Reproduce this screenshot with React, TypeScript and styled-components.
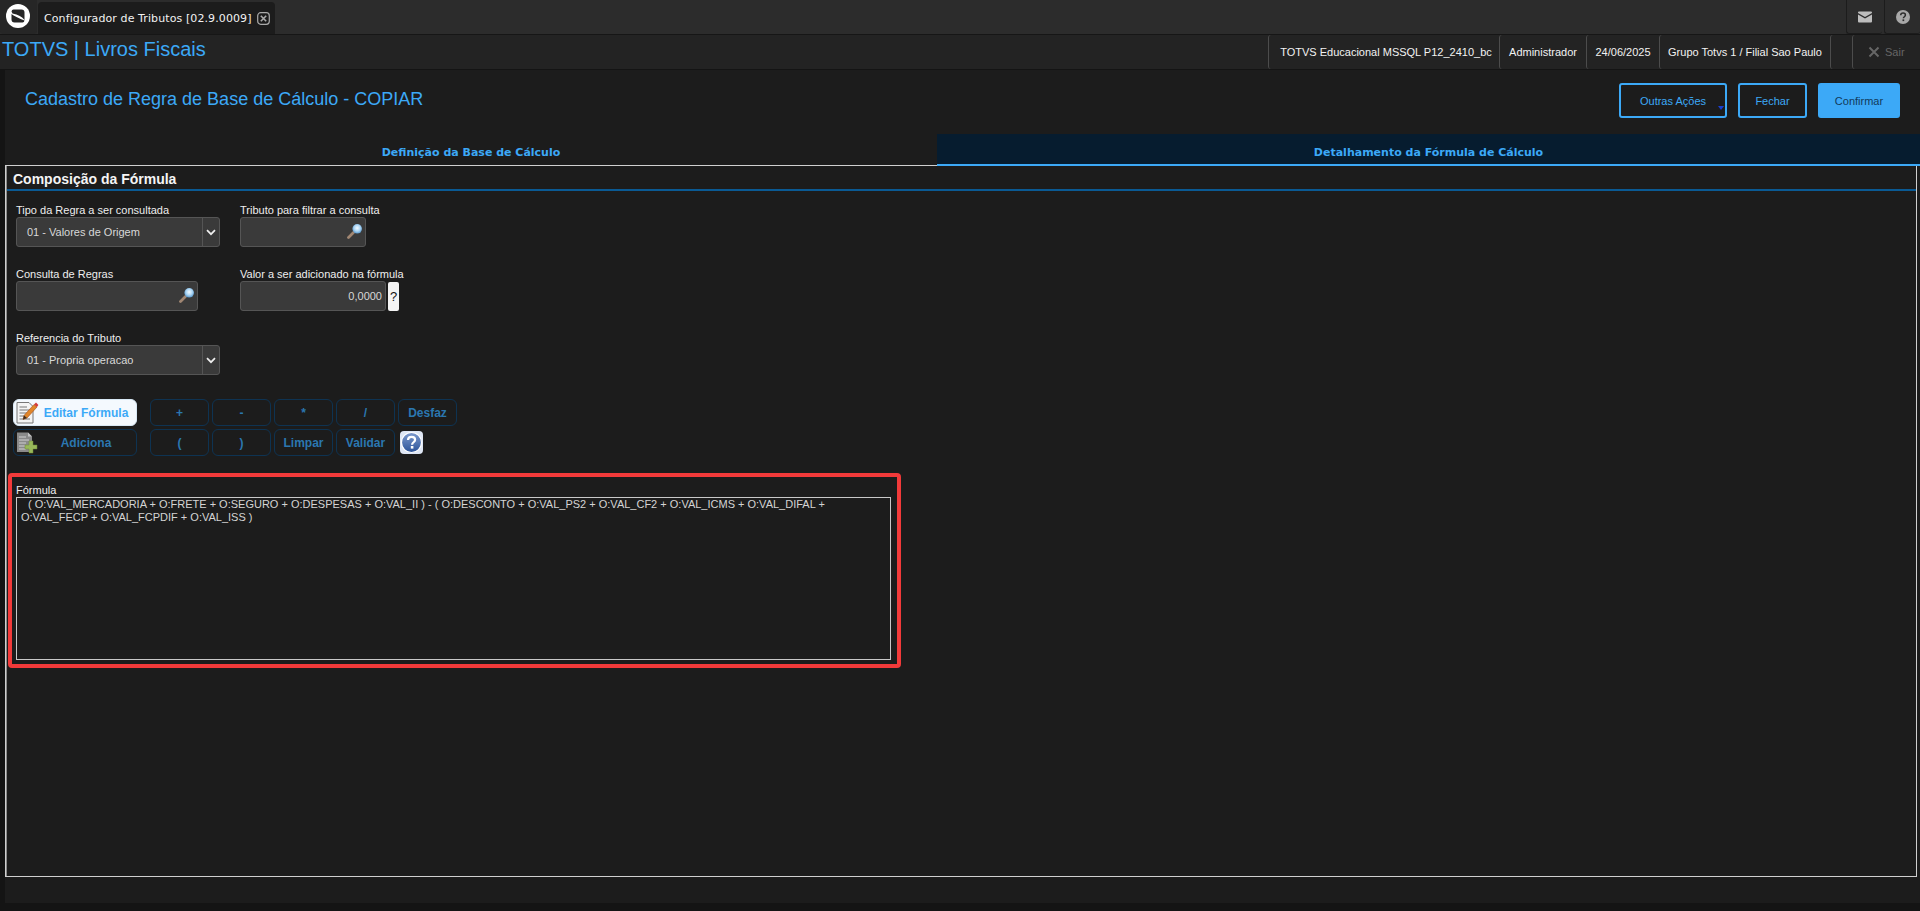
import React from "react";
import styled, { createGlobalStyle } from "styled-components";

const Global = createGlobalStyle`
  html, body { margin: 0; padding: 0; height: 100%; background: #141414; overflow: hidden; }
  #root { height: 911px; }
  * { box-sizing: border-box; }
`;

const BLUE = "#3ca9f7";
const sans = `"Liberation Sans", Arial, sans-serif`;

const Page = styled.div`
  width: 1920px;
  height: 911px;
  display: flex;
  flex-direction: column;
  background: #141414;
  font-family: ${sans};
`;

const TopBar = styled.header`
  height: 34px;
  display: flex;
  align-items: stretch;
  background: #2c2c2c;
  margin-bottom: 1px;
  box-shadow: 0 1px 0 #161616;
`;
const LogoTile = styled.div`
  width: 37px;
  display: flex;
  align-items: center;
  justify-content: center;
  padding: 0 1px 3px 0;
  background: #262626;
  border-radius: 0 0 3px 3px;
`;
const ProgramTab = styled.div`
  margin: 2px 0 0 1px;
  width: 237px;
  display: flex;
  align-items: center;
  gap: 5px;
  padding-left: 6px;
  background: #1c1c1c;
  border-radius: 4px 4px 0 0;
  color: #f2f2f2;
  font: 11px "DejaVu Sans", sans-serif;
  letter-spacing: 0.1px;
`;
const TabTitle = styled.span`
  white-space: nowrap;
`;
const TopSpacer = styled.div`
  flex: 1;
`;
const IconTile = styled.div`
  width: 36px;
  margin-left: 2px;
  display: flex;
  align-items: center;
  justify-content: center;
  background: #2c2c2c;
  border-left: 1px solid #1c1c1c;
  border-bottom: 1px solid #1c1c1c;
  border-radius: 0 0 3px 3px;
`;

const InfoBar = styled.div`
  height: 34px;
  display: flex;
  align-items: stretch;
  background: #232323;
`;
const Brand = styled.div`
  flex: 1;
  padding: 1px 0 0 2px;
  color: ${BLUE};
  font-size: 20px;
  line-height: 26px;
  white-space: nowrap;
`;
const InfoCell = styled.div<{ $w: number; $shift?: number }>`
  width: ${(p) => p.$w}px;
  display: flex;
  align-items: center;
  justify-content: center;
  padding-left: ${(p) => p.$shift ?? 0}px;
  border-left: 1px solid #4c4c4c;
  border-radius: 3px;
  color: #f2f2f2;
  font-size: 11px;
  white-space: nowrap;
`;
const ExitCell = styled.div`
  width: 68px;
  display: flex;
  align-items: center;
  gap: 5px;
  padding-left: 15px;
  border-left: 1px solid #4c4c4c;
  border-radius: 3px;
  color: #666;
  font-size: 11px;
`;

const Workspace = styled.main`
  margin: 1px 0 0 5px;
  height: 833px;
  width: 1915px;
  display: flex;
  flex-direction: column;
  background: #1c1c1c;
`;
const TitleRow = styled.div`
  height: 64px;
  display: flex;
  justify-content: space-between;
  padding: 13px 20px 0 20px;
`;
const PageTitle = styled.h1`
  margin: 4px 0 0;
  color: ${BLUE};
  font-size: 18px;
  font-weight: 400;
  line-height: 24px;
`;
const Actions = styled.div`
  display: flex;
  gap: 11px;
`;
const ActionButton = styled.button<{ $w: number; $primary?: boolean }>`
  position: relative;
  width: ${(p) => p.$w}px;
  height: 35px;
  border: 2px solid ${BLUE};
  border-radius: 3px;
  background: ${(p) => (p.$primary ? BLUE : "transparent")};
  color: ${(p) => (p.$primary ? "#123a5a" : BLUE)};
  font: 11px ${sans};
  padding: 0;
`;
const Caret = styled.i`
  position: absolute;
  right: 1px;
  bottom: 6px;
  border: 3px solid transparent;
  border-top: 4px solid #1a3fd0;
  border-bottom: 0;
`;

const Tabs = styled.nav`
  height: 32px;
  display: flex;
`;
const TabItem = styled.div<{ $active?: boolean }>`
  flex: ${(p) => (p.$active ? "0 0 983px" : "0 0 932px")};
  display: flex;
  align-items: center;
  justify-content: center;
  padding-top: ${(p) => (p.$active ? 6 : 5)}px;
  background: ${(p) => (p.$active ? "#061c2f" : "transparent")};
  border-bottom: ${(p) => (p.$active ? `2px solid ${BLUE}` : "1px solid #cfcfcf")};
  color: ${BLUE};
  font: bold 11px "DejaVu Sans", sans-serif;
`;

const Panel = styled.section`
  width: 1912px;
  height: 711px;
  border: solid #cfcfcf;
  border-width: 0 1px 1px 1px;
  box-shadow: inset 1px 0 0 #8a8a8a;
  display: flex;
  flex-direction: column;
  padding-left: 1px;
`;
const SectionHead = styled.h2`
  height: 25px;
  margin: 0;
  padding: 5px 0 0 6px;
  border-bottom: 2px solid #0a5a94;
  color: #f5f5f5;
  font-size: 14px;
  line-height: 16px;
  font-weight: 700;
`;

const FormGrid = styled.div`
  display: grid;
  grid-template-columns: 224px 1fr;
  grid-auto-rows: 64px;
  padding: 12px 0 0 9px;
  height: 208px;
`;
const Field = styled.div`
  display: flex;
  flex-direction: column;
  align-items: flex-start;
`;
const FieldLabel = styled.label`
  display: block;
  height: 14px;
  color: #eeeeee;
  font-size: 11px;
  line-height: 14px;
  white-space: nowrap;
`;
const FieldRow = styled.div`
  display: flex;
  gap: 2px;
`;
const InputBox = styled.div<{ $w: number }>`
  width: ${(p) => p.$w}px;
  height: 30px;
  display: flex;
  align-items: center;
  background: #3a3a3a;
  border: 1px solid #555;
  border-radius: 3px;
  color: #d8d8d8;
  font-size: 11px;
`;
const SelectText = styled.span`
  flex: 1;
  padding-left: 10px;
`;
const ChevronCell = styled.span`
  width: 17px;
  height: 100%;
  display: flex;
  align-items: center;
  justify-content: center;
  border-left: 1px solid #555;
`;
const LensSlot = styled.span`
  margin-left: auto;
  margin-right: 2px;
  margin-bottom: 3px;
  display: flex;
`;
const ValueText = styled.span`
  flex: 1;
  text-align: right;
  padding-right: 3px;
`;
const HintButton = styled.span`
  width: 11px;
  height: 29px;
  margin-top: 1px;
  display: flex;
  align-items: center;
  justify-content: center;
  background: #f4f4f4;
  border-radius: 2px;
  color: #111;
  font-size: 13px;
`;

const ButtonArea = styled.div`
  display: grid;
  grid-template-columns: 124px repeat(5, 59px);
  grid-auto-rows: 27px;
  gap: 3px;
  padding-left: 6px;
`;
const ButtonGroupGap = styled.div`
  display: contents;
`;
const CalcButton = styled.button`
  height: 27px;
  margin-left: 10px;
  width: 59px;
  padding: 0;
  background: transparent;
  border: 1px solid #0e3352;
  border-radius: 6px;
  color: #2b77b0;
  font: bold 12px ${sans};
`;
const WideButton = styled.button<{ $light?: boolean }>`
  width: 124px;
  height: 27px;
  padding: 0 0 0 22px;
  position: relative;
  background: ${(p) => (p.$light ? "#f4f9fe" : "transparent")};
  border: 1px solid ${(p) => (p.$light ? "#d8e8f5" : "#0e3352")};
  border-radius: 6px;
  color: ${(p) => (p.$light ? "#3ca9f7" : "#2b77b0")};
  font: bold 12px ${sans};
`;
const WideIcon = styled.span`
  position: absolute;
  left: 1px;
  top: 1px;
  display: flex;
`;
const HelpSlot = styled.span`
  margin-left: 12px;
  display: flex;
  align-items: center;
`;

const Annotated = styled.div`
  width: 893px;
  height: 195px;
  margin: 17px 0 0 1px;
  padding: 6px 0 0 4px;
  border: 4px solid #f23a3a;
  border-radius: 4px;
`;
const FormulaBox = styled.div`
  width: 875px;
  height: 163px;
  padding: 0 30px 0 4px;
  border: 1px solid #c8c8c8;
  color: #d4d4d4;
  font-size: 11px;
  line-height: 12.5px;
`;
const Indent = styled.span`
  margin-left: 7px;
`;

const Logo = () => (
  <svg width="28" height="28" viewBox="0 0 28 28">
    <circle cx="14" cy="14" r="12" fill="#fff" />
    <path d="M9.5 7.5H17.5Q20.5 7.5 20.5 10.5V18Q17 13 8.5 11.5L7.5 9.5Q7.8 7.5 9.5 7.5Z" fill="#262626" />
    <path d="M18.5 20.5H10.5Q7.5 20.5 7.5 17.5V11.9Q11 14.8 20.5 18.5 20.2 20.5 18.5 20.5Z" fill="#262626" />
  </svg>
);
const CloseIcon = () => (
  <svg width="13" height="13" viewBox="0 0 13 13">
    <rect x="0.7" y="0.7" width="11.6" height="11.6" rx="3" fill="none" stroke="#aaa" strokeWidth="1.2" />
    <path d="M3.8 3.8 9.2 9.2M9.2 3.8 3.8 9.2" stroke="#aaa" strokeWidth="1.6" />
  </svg>
);
const Mail = () => (
  <svg width="14" height="12" viewBox="0 0 14 12">
    <path d="M0 1.5A1 1 0 0 1 1 .5H13a1 1 0 0 1 1 1v.4L7 6 0 1.9Z" fill="#bdbdbd" />
    <path d="M0 3.4 7 7.5l7-4.1V10.5a1 1 0 0 1-1 1H1a1 1 0 0 1-1-1Z" fill="#bdbdbd" />
  </svg>
);
const Help = () => (
  <svg width="14" height="14" viewBox="0 0 14 14">
    <circle cx="7" cy="7" r="7" fill="#a8a8a8" />
    <path d="M4.7 5.2C4.8 3.8 5.8 3.1 7.1 3.1c1.4 0 2.3.8 2.3 1.9 0 1.8-2 1.7-2 3.3" fill="none" stroke="#2c2c2c" strokeWidth="1.5" />
    <rect x="6.5" y="9.4" width="1.7" height="1.7" fill="#2c2c2c" />
  </svg>
);
const Chevron = () => (
  <svg width="10" height="7" viewBox="0 0 10 7">
    <path d="M1 1.2 5 5.2 9 1.2" fill="none" stroke="#eee" strokeWidth="1.7" />
  </svg>
);
const Lens = ({ id }: { id: string }) => (
  <svg width="16" height="16" viewBox="0 0 16 16">
    <defs>
      <radialGradient id={id} cx="50%" cy="42%" r="60%">
        <stop offset="0" stopColor="#f4fbff" />
        <stop offset="0.55" stopColor="#a9d4f4" />
        <stop offset="1" stopColor="#4f8fc4" />
      </radialGradient>
    </defs>
    <path d="M1.5 14.5 6.5 9.5" stroke="#a08672" strokeWidth="2.8" strokeLinecap="round" />
    <circle cx="10.2" cy="5.8" r="4.8" fill={`url(#${id})`} />
  </svg>
);
const XMark = () => (
  <svg width="12" height="12" viewBox="0 0 12 12">
    <path d="M1.5 1.5 10.5 10.5M10.5 1.5 1.5 10.5" stroke="#666" strokeWidth="2" />
  </svg>
);
const EditIcon = () => (
  <svg width="24" height="24" viewBox="0 0 24 24">
    <path d="M2 1.5H14L18 5.5V22H2Z" fill="#f4f4f4" stroke="#777" />
    <path d="M4.5 6H12M4.5 9H15M4.5 12H13M4.5 15H11M4.5 18H15" stroke="#777" strokeWidth="1" />
    <path d="M8 18.5 9 14.5 19 3.5 22 6 12 17Z" fill="#e0862a" stroke="#a24b16" strokeWidth=".6" />
    <path d="M19 3.5 21 1.5 23.4 4 22 6Z" fill="#d33b3b" />
    <path d="M8 18.5 9 14.5 12 17Z" fill="#3a2c20" />
  </svg>
);
const AddIcon = () => (
  <svg width="24" height="24" viewBox="0 0 24 24">
    <path d="M2 1.5H13L17 5.5V21H2Z" fill="#8a8a8a" />
    <path d="M13 1.5V5.5H17Z" fill="#c4c4c4" />
    <path d="M4 6H11M4 9H14M4 12H11M4 15H10M4 18H11" stroke="#d0d0d0" strokeWidth="1" />
    <path d="M14 10H18V14H22V18H18V22H14V18H10V14H14Z" fill="#98b85a" stroke="#6c8a35" strokeWidth=".5" />
  </svg>
);
const QuestionBadge = () => (
  <svg width="23" height="23" viewBox="0 0 23 23">
    <defs>
      <linearGradient id="qG" x1="0" y1="0" x2="0" y2="1">
        <stop offset="0" stopColor="#7f9ccf" />
        <stop offset="1" stopColor="#2a5298" />
      </linearGradient>
    </defs>
    <rect x="0" y="0" width="23" height="23" rx="4" fill="#dfe7f5" />
    <circle cx="11.5" cy="11.5" r="10" fill="url(#qG)" stroke="#fff" strokeWidth="1.2" />
    <path d="M8 9C8 6.8 9.7 5.8 11.6 5.8c2 0 3.5 1.2 3.5 2.9 0 2.6-3 2.5-3 5" fill="none" stroke="#fff" strokeWidth="2.2" />
    <rect x="10.8" y="15" width="2.6" height="2.6" fill="#fff" />
  </svg>
);

const SelectField = ({ text }: { text: string }) => (
  <InputBox $w={204}>
    <SelectText>{text}</SelectText>
    <ChevronCell>
      <Chevron />
    </ChevronCell>
  </InputBox>
);

export default function App() {
  return (
    <Page>
      <Global />
      <TopBar>
        <LogoTile>
          <Logo />
        </LogoTile>
        <ProgramTab>
          <TabTitle>Configurador de Tributos [02.9.0009]</TabTitle>
          <CloseIcon />
        </ProgramTab>
        <TopSpacer />
        <IconTile>
          <Mail />
        </IconTile>
        <IconTile>
          <Help />
        </IconTile>
      </TopBar>
      <InfoBar>
        <Brand>TOTVS | Livros Fiscais</Brand>
        <InfoCell $w={231} $shift={4}>TOTVS Educacional MSSQL P12_2410_bc</InfoCell>
        <InfoCell $w={87}>Administrador</InfoCell>
        <InfoCell $w={73}>24/06/2025</InfoCell>
        <InfoCell $w={171}>Grupo Totvs 1 / Filial Sao Paulo</InfoCell>
        <InfoCell $w={22} />
        <ExitCell>
          <XMark />
          Sair
        </ExitCell>
      </InfoBar>
      <Workspace>
        <TitleRow>
          <PageTitle>Cadastro de Regra de Base de Cálculo - COPIAR</PageTitle>
          <Actions>
            <ActionButton $w={108}>
              Outras Ações
              <Caret />
            </ActionButton>
            <ActionButton $w={69}>Fechar</ActionButton>
            <ActionButton $w={82} $primary>
              Confirmar
            </ActionButton>
          </Actions>
        </TitleRow>
        <Tabs>
          <TabItem>Definição da Base de Cálculo</TabItem>
          <TabItem $active>Detalhamento da Fórmula de Cálculo</TabItem>
        </Tabs>
        <Panel>
          <SectionHead>Composição da Fórmula</SectionHead>
          <FormGrid>
            <Field>
              <FieldLabel>Tipo da Regra a ser consultada</FieldLabel>
              <SelectField text="01 - Valores de Origem" />
            </Field>
            <Field>
              <FieldLabel>Tributo para filtrar a consulta</FieldLabel>
              <InputBox $w={126}>
                <LensSlot>
                  <Lens id="lensA" />
                </LensSlot>
              </InputBox>
            </Field>
            <Field>
              <FieldLabel>Consulta de Regras</FieldLabel>
              <InputBox $w={182}>
                <LensSlot>
                  <Lens id="lensB" />
                </LensSlot>
              </InputBox>
            </Field>
            <Field>
              <FieldLabel>Valor a ser adicionado na fórmula</FieldLabel>
              <FieldRow>
                <InputBox $w={146}>
                  <ValueText>0,0000</ValueText>
                </InputBox>
                <HintButton>?</HintButton>
              </FieldRow>
            </Field>
            <Field>
              <FieldLabel>Referencia do Tributo</FieldLabel>
              <SelectField text="01 - Propria operacao" />
            </Field>
          </FormGrid>
          <ButtonArea>
            <WideButton $light>
              <WideIcon>
                <EditIcon />
              </WideIcon>
              Editar Fórmula
            </WideButton>
            <ButtonGroupGap>
              <CalcButton>+</CalcButton>
              <CalcButton>-</CalcButton>
              <CalcButton>*</CalcButton>
              <CalcButton>/</CalcButton>
              <CalcButton>Desfaz</CalcButton>
            </ButtonGroupGap>
            <WideButton>
              <WideIcon>
                <AddIcon />
              </WideIcon>
              Adiciona
            </WideButton>
            <ButtonGroupGap>
              <CalcButton>(</CalcButton>
              <CalcButton>)</CalcButton>
              <CalcButton>Limpar</CalcButton>
              <CalcButton>Validar</CalcButton>
              <HelpSlot>
                <QuestionBadge />
              </HelpSlot>
            </ButtonGroupGap>
          </ButtonArea>
          <Annotated>
            <FieldLabel as="div">Fórmula</FieldLabel>
            <FormulaBox>
              <Indent>( O:VAL_MERCADORIA + O:FRETE + O:SEGURO + O:DESPESAS + O:VAL_II ) - ( O:DESCONTO + O:VAL_PS2 + O:VAL_CF2 + O:VAL_ICMS + O:VAL_DIFAL +</Indent>{" "}
              O:VAL_FECP + O:VAL_FCPDIF + O:VAL_ISS )
            </FormulaBox>
          </Annotated>
        </Panel>
      </Workspace>
    </Page>
  );
}
